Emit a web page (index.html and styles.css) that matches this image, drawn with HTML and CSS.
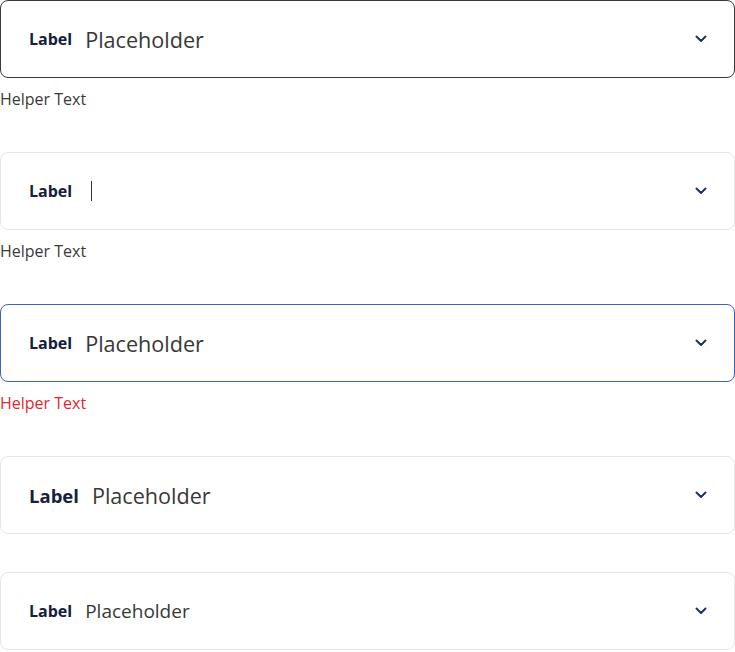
FILE: index.html
```html
<!DOCTYPE html>
<html lang="en">
<head>
<meta charset="utf-8">
<title>Select fields</title>
<link rel="stylesheet" href="styles.css">
</head>
<body>
<div class="stack">
  <div class="group">
    <div class="field field-default">
      <span class="label">Label</span>
      <span class="value">Placeholder</span>
      <svg class="chev" width="12" height="8" viewBox="0 0 12 8"><path d="M1.5 1.5 L6 6 L10.5 1.5" fill="none" stroke="#1d3461" stroke-width="2" stroke-linecap="round" stroke-linejoin="round"/></svg>
    </div>
    <div class="helper">Helper Text</div>
  </div>
  <div class="group">
    <div class="field field-light">
      <span class="label">Label</span>
      <span class="caret"></span>
      <svg class="chev" width="12" height="8" viewBox="0 0 12 8"><path d="M1.5 1.5 L6 6 L10.5 1.5" fill="none" stroke="#1d3461" stroke-width="2" stroke-linecap="round" stroke-linejoin="round"/></svg>
    </div>
    <div class="helper">Helper Text</div>
  </div>
  <div class="group">
    <div class="field field-focus">
      <span class="label">Label</span>
      <span class="value">Placeholder</span>
      <svg class="chev" width="12" height="8" viewBox="0 0 12 8"><path d="M1.5 1.5 L6 6 L10.5 1.5" fill="none" stroke="#1d3461" stroke-width="2" stroke-linecap="round" stroke-linejoin="round"/></svg>
    </div>
    <div class="helper helper-error">Helper Text</div>
  </div>
  <div class="group">
    <div class="field field-light">
      <span class="label label-lg">Label</span>
      <span class="value">Placeholder</span>
      <svg class="chev" width="12" height="8" viewBox="0 0 12 8"><path d="M1.5 1.5 L6 6 L10.5 1.5" fill="none" stroke="#1d3461" stroke-width="2" stroke-linecap="round" stroke-linejoin="round"/></svg>
    </div>
  </div>
  <div class="group">
    <div class="field field-light">
      <span class="label">Label</span>
      <span class="value value-sm">Placeholder</span>
      <svg class="chev" width="12" height="8" viewBox="0 0 12 8"><path d="M1.5 1.5 L6 6 L10.5 1.5" fill="none" stroke="#1d3461" stroke-width="2" stroke-linecap="round" stroke-linejoin="round"/></svg>
    </div>
  </div>
</div>
</body>
</html>
```
FILE: styles.css
```css
html, body {
  margin: 0;
  padding: 0;
  background: #ffffff;
}
body {
  font-family: "Open Sans", "Noto Sans", sans-serif;
}
.stack {
  display: flex;
  flex-direction: column;
  gap: 38px;
  width: 735px;
}
.group {
  display: flex;
  flex-direction: column;
}
.field {
  box-sizing: border-box;
  height: 78px;
  border-radius: 8px;
  border: 1px solid #e6e6e6;
  display: flex;
  align-items: center;
  padding: 0 27px 0 28px;
  background: #fff;
}
.field-default {
  border-color: #3a3a3a;
}
.field-focus {
  border-color: #3d62c4;
}
.label {
  font-size: 16px;
  font-weight: 700;
  color: #14203d;
  margin-right: 13px;
}
.label-lg {
  font-size: 18.5px;
}
.value {
  font-size: 21.6px;
  color: #383838;
  flex: 1;
}
.value-sm {
  font-size: 19px;
}
.caret {
  width: 1px;
  height: 20px;
  background: #333;
  margin-left: 6px;
  flex: 0 0 auto;
}
.chev {
  margin-left: auto;
  display: block;
}
.helper {
  font-size: 16px;
  line-height: 22px;
  margin-top: 10px;
  height: 26px;
  color: #3a3a3a;
}
.helper-error {
  color: #e0282e;
}
```
